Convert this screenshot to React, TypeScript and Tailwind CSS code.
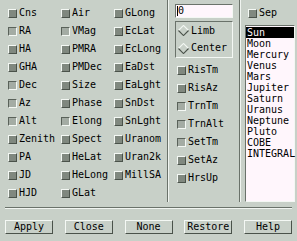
import React from "react";

const col1: [string, boolean][] = [
  ["Cns", false], ["RA", true], ["HA", false], ["GHA", false], ["Dec", true], ["Az", true],
  ["Alt", true], ["Zenith", false], ["PA", false], ["JD", false], ["HJD", false],
];
const col2: [string, boolean][] = [
  ["Air", false], ["VMag", true], ["PMRA", false], ["PMDec", false], ["Size", false], ["Phase", false],
  ["Elong", true], ["Spect", false], ["HeLat", false], ["HeLong", false], ["GLat", false],
];
const col3: [string, boolean][] = [
  ["GLong", false], ["EcLat", false], ["EcLong", false], ["EaDst", false], ["EaLght", false],
  ["SnDst", false], ["SnLght", false], ["Uranom", false], ["Uran2k", false], ["MillSA", false],
];
const mid: [string, boolean][] = [
  ["RisTm", false], ["RisAz", false], ["TrnTm", true], ["TrnAlt", true], ["SetTm", true],
  ["SetAz", false], ["HrsUp", false],
];
const bodies = ["Sun", "Moon", "Mercury", "Venus", "Mars", "Jupiter", "Saturn", "Uranus", "Neptune", "Pluto", "COBE", "INTEGRAL"];

function Box({ on }: { on: boolean }) {
  return on ? (
    <div className="w-[9px] h-[9px] shrink-0 border border-t-[#5a625a] border-l-[#5a625a] border-b-[#f4f8f4] border-r-[#f4f8f4] bg-[#a4aca4]" />
  ) : (
    <div className="w-[9px] h-[9px] shrink-0 border border-t-[#f4f8f4] border-l-[#f4f8f4] border-b-[#4a524a] border-r-[#4a524a] bg-[#80887f]" />
  );
}

function Check({ label, on }: { label: string; on: boolean }) {
  return (
    <div className="h-[18px] flex items-center gap-[2px] whitespace-nowrap">
      <Box on={on} />
      <span className="leading-none">{label}</span>
    </div>
  );
}

function Diamond() {
  return (
    <svg width="11" height="11" viewBox="0 0 12 12" className="shrink-0">
      <polygon points="6,0.5 11.5,6 6,11.5 0.5,6" fill="#c8d0c8" />
      <polyline points="0.5,6 6,0.5 11.5,6" fill="none" stroke="#f4f8f4" strokeWidth="1.2" />
      <polyline points="0.5,6 6,11.5 11.5,6" fill="none" stroke="#4a524a" strokeWidth="1.2" />
    </svg>
  );
}

function VSep() {
  return <div className="w-[2px] h-[202px] shrink-0 border-l border-l-[#6a726a] border-r border-r-[#f0f4f0]" />;
}

function Btn({ label }: { label: string }) {
  return (
    <div className="w-[48px] h-[14px] flex items-center justify-center border border-t-[#f4f8f4] border-l-[#f4f8f4] border-b-[#4a524a] border-r-[#4a524a] bg-[#c8d0c8] leading-none">
      {label}
    </div>
  );
}

export default function App() {
  return (
    <div
      className="w-[297px] h-[241px] bg-[#c8d0c8] text-black text-[10px] overflow-hidden flex flex-col"
      style={{ fontFamily: '"DejaVu Sans Mono", "Liberation Mono", monospace' }}
    >
      <div className="flex h-[207px]">
        <div className="w-[167px] flex pl-[8px] pt-[4px]">
          {[col1, col2, col3].map((c, i) => (
            <div key={i} className="w-[53px] flex flex-col">
              {c.map(([l, on]) => (
                <Check key={l} label={l} on={on} />
              ))}
            </div>
          ))}
        </div>
        <VSep />
        <div className="w-[70px] flex flex-col pl-[6px] pt-[4px]">
          <div className="w-[58px] h-[14px] border border-t-[#6a726a] border-l-[#6a726a] border-b-[#f4f8f4] border-r-[#f4f8f4] bg-[#fff6fc] flex items-center pl-[1px] leading-none">
            <div className="w-[1px] h-[10px] bg-black" />
            <span>0</span>
          </div>
          <div className="mt-[3px] w-[58px] h-[37px] border border-t-[#6a726a] border-l-[#6a726a] border-b-[#f4f8f4] border-r-[#f4f8f4] flex flex-col justify-center pl-[2px]">
            <div className="h-[18px] flex items-center gap-[2px] leading-none">
              <Diamond />
              <span>Limb</span>
            </div>
            <div className="h-[18px] flex items-center gap-[2px] leading-none">
              <Diamond />
              <span>Center</span>
            </div>
          </div>
          <div className="mt-[3px] pl-[2px] flex flex-col">
            {mid.map(([l, on]) => (
              <Check key={l} label={l} on={on} />
            ))}
          </div>
        </div>
        <VSep />
        <div className="flex-1 flex flex-col pt-[4px] pl-[7px]">
          <Check label="Sep" on={false} />
          <div className="-ml-[3px] mt-[3px] w-[50px] h-[177px] border border-t-[#6a726a] border-l-[#6a726a] border-b-[#f4f8f4] border-r-[#f4f8f4] bg-[#fff6fc] pt-[1px]">
            {bodies.map((b, i) => (
              <div
                key={b}
                className={
                  "h-[11px] leading-[11px] pl-[1px] whitespace-nowrap " +
                  (i === 0 ? "bg-black text-[#fff6fc]" : "")
                }
              >
                {b}
              </div>
            ))}
          </div>
        </div>
      </div>
      <div className="mx-[5px] h-[2px] border-t border-t-[#6a726a] border-b border-b-[#f0f4f0]" />
      <div className="mt-[11px] px-[5px] flex justify-between">
        <Btn label="Apply" />
        <Btn label="Close" />
        <Btn label="None" />
        <Btn label="Restore" />
        <Btn label="Help" />
      </div>
    </div>
  );
}
